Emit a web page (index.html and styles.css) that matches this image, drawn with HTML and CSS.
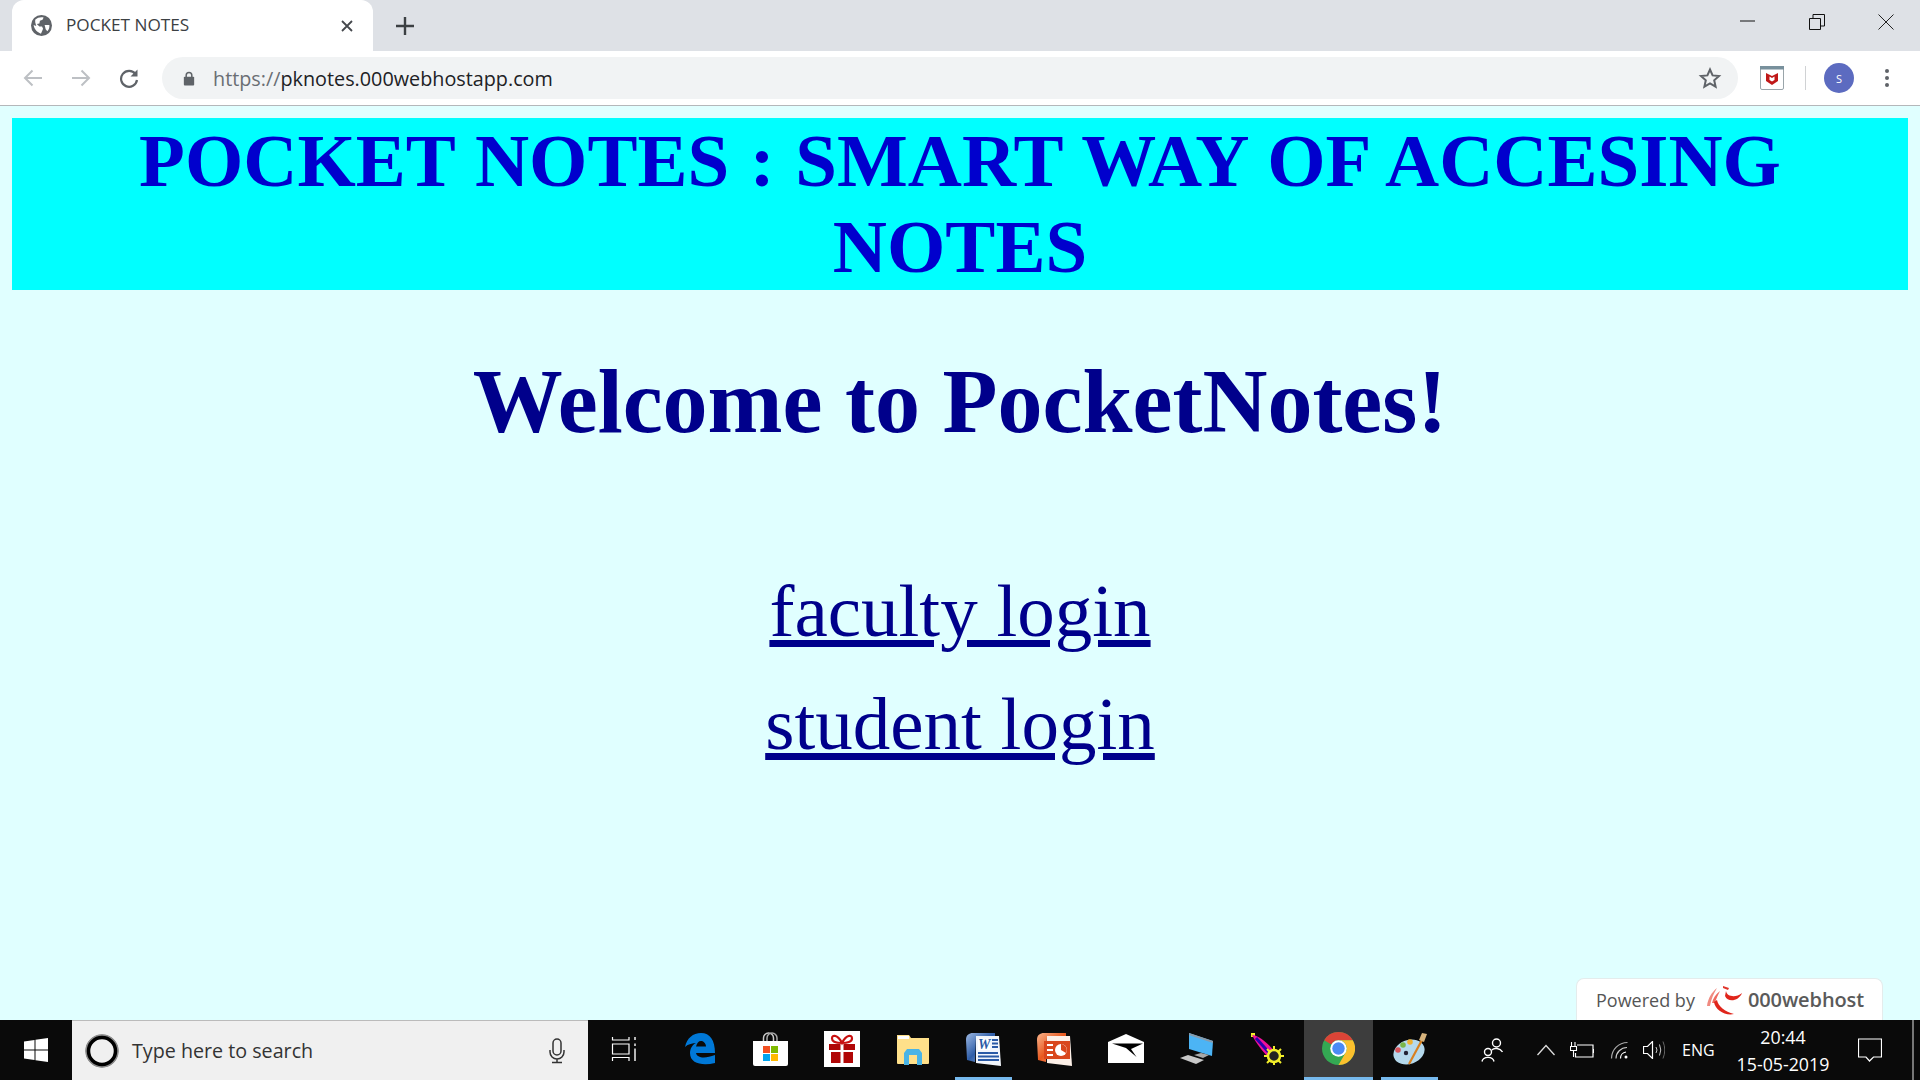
FILE: index.html
```html
<!DOCTYPE html>
<html lang="en">
<head>
    <meta charset="UTF-8">
    <title>POCKET NOTES</title>
    <link rel="stylesheet" href="styles.css">
</head>
<body>
    <div class="tabstrip">
        <div class="tab">
            <svg class="tab-globe" viewBox="0 0 20 20" width="21" height="21"><circle cx="10" cy="10" r="10" fill="#5f6368"/><path d="M4 4.500C6 2.500 9 1.800 12 2.300L11 4.500 8.500 5.500 8 8 5.500 8.500 8 11 10.500 11 11.500 13 9.500 17.800C6 16.500 3 13.500 2.500 9.500L5 10.500 4 7Z" fill="#fff"/><path d="M13 9.500H17.500C17.800 11.800 17 14 15.500 15.500L14 13.500Z" fill="#fff"/></svg>
            <span class="tab-title">POCKET NOTES</span>
            <svg class="tab-close" viewBox="0 0 12 12" width="12" height="12"><path d="M1 1 11 11M11 1 1 11" stroke="#45484d" stroke-width="1.800"/></svg>
        </div>
        <svg class="new-tab" viewBox="0 0 18 18" width="18" height="18"><path d="M9 0V18M0 9H18" stroke="#3c4043" stroke-width="2.400"/></svg>
        <div class="win-controls">
            <svg viewBox="0 0 16 16" width="16" height="16"><path d="M0 7H15" stroke="#111" stroke-width="1"/></svg>
            <svg viewBox="0 0 16 16" width="16" height="16"><path d="M.5 4.500H11.500V15.500H.5ZM4 4.500V.5H15.500V12H11.500" fill="none" stroke="#111" stroke-width="1"/></svg>
            <svg viewBox="0 0 16 16" width="16" height="16"><path d="M.5 .5 15.500 15.500M15.500 .5 .5 15.500" stroke="#222" stroke-width="1"/></svg>
        </div>
    </div>

    <div class="toolbar">
        <svg class="nav-icon" viewBox="0 0 20 20" width="20" height="20"><path d="M19 10H2M9.500 2.500 2 10 9.500 17.500" fill="none" stroke="#bdc0c4" stroke-width="2"/></svg>
        <svg class="nav-icon" viewBox="0 0 20 20" width="20" height="20"><path d="M1 10H18M10.500 2.500 18 10 10.500 17.500" fill="none" stroke="#bdc0c4" stroke-width="2"/></svg>
        <svg class="nav-icon" viewBox="0 0 20 20" width="20" height="20"><path d="M16.500 6A8 8 0 1 0 18 12" fill="none" stroke="#5f6368" stroke-width="2.200"/><path d="M18.500 1.500V8.500H11.500Z" fill="#5f6368"/></svg>
        <div class="omnibox">
            <svg class="lock" viewBox="0 0 12 16" width="12" height="15"><path d="M3 7V4.500A3 3 0 0 1 9 4.500V7" fill="none" stroke="#5f6368" stroke-width="1.600"/><rect x="0.500" y="6" width="11" height="9.500" rx="1" fill="#5f6368"/></svg>
            <span class="url"><span class="url-scheme">https://</span>pknotes.000webhostapp.com</span>
            <svg class="star" viewBox="0 0 24 24" width="24" height="24"><path d="M12 3.500 14.600 9.400 21 10 16.200 14.300 17.600 20.600 12 17.300 6.400 20.600 7.800 14.300 3 10 9.400 9.400Z" fill="none" stroke="#5f6368" stroke-width="2"/></svg>
        </div>
        <svg class="ext-icon" viewBox="0 0 24 24" width="24" height="24"><rect x=".5" y=".5" width="23" height="23" rx="1.500" fill="#fff" stroke="#9aa5aa"/><rect x="0" y="0" width="24" height="3.500" fill="#78909c"/><path d="M6 7 9 8.500 12 10 15 8.500 18 7V15L12 19 6 15Z" fill="#c01818"/><path d="M9.500 10.500 12 12 14.500 10.500V14L12 15.500 9.500 14Z" fill="#fff"/></svg>
        <div class="toolbar-sep"></div>
        <div class="avatar">S</div>
        <svg class="menu-dots" viewBox="0 0 6 20" width="6" height="20"><circle cx="3" cy="3" r="2" fill="#5f6368"/><circle cx="3" cy="10" r="2" fill="#5f6368"/><circle cx="3" cy="17" r="2" fill="#5f6368"/></svg>
    </div>

    <main class="page">
        <h1 class="banner">POCKET NOTES : SMART WAY OF ACCESING NOTES</h1>
        <h2 class="welcome">Welcome to PocketNotes!</h2>
        <div class="login-links">
            <a href="#">faculty login</a>
            <a href="#">student login</a>
        </div>
        <div class="powered">
            <span>Powered by</span>
            <svg class="powered-logo" viewBox="0 0 36 30" width="36" height="30">
                <path d="M1 21C2 13 6 7 11 3 8 8 5 14 4 21Z" fill="#f08a80"/>
                <path d="M6 18C7 13 10 9 14 6 12 10 10 14 9 18Z" fill="#ee6a60"/>
                <path d="M17 1 23 3 22 5 17 3Z" fill="#e0352b"/>
                <path d="M20 6C21 12 30 13 36 8 33 16 22 18 19 11Z" fill="#e0251b"/>
                <path d="M11 15C12 21 19 27 28 29 19 31 9 25 8 17Z" fill="#e0251b"/>
            </svg>
            <span class="powered-name">000webhost</span>
        </div>
    </main>

    <footer class="taskbar">
        <svg class="start-icon" viewBox="0 0 24 24" width="24" height="24"><path d="M0 3.500 10.500 2V11.500H0ZM11.500 1.800 24 0V11.500H11.500ZM0 12.500H10.500V22L0 20.500ZM11.500 12.500H24V24L11.500 22.200Z" fill="#fff"/></svg>
        <div class="search-box">
            <svg class="cortana" viewBox="0 0 34 34" width="34" height="34"><circle cx="17" cy="17" r="14" fill="none" stroke="#000" stroke-width="4.500"/><circle cx="17" cy="17" r="16" fill="none" stroke="#8c8c8c" stroke-width="1.500"/></svg>
            <span class="search-text">Type here to search</span>
            <svg class="mic" viewBox="0 0 18 26" width="18" height="26"><rect x="5" y="1" width="8" height="16" rx="4" fill="none" stroke="#333" stroke-width="1.500"/><path d="M2 12V14A7 7 0 0 0 16 14V12M9 21V24M4 24.500H14" fill="none" stroke="#333" stroke-width="1.500"/></svg>
        </div>
        <div class="task-icons">
            <!-- task view -->
            <div class="task-slot task-view"><svg viewBox="0 0 26 24" width="26" height="24"><path d="M1.500 0V3H18V0M1.500 7H18V17H1.500ZM1.500 24V20.500H18V24" fill="none" stroke="#fff" stroke-width="1.200"/><path d="M24 0V3M24 6.500V9M24 11.500V24" stroke="#fff" stroke-width="1.400"/></svg></div>
            <!-- edge -->
            <div class="task-slot"><svg viewBox="0 0 30 32" width="30" height="32"><path fill-rule="evenodd" d="M0 14C2 5 8 0 16 0 25 0 30 7 30 20H11C12 25 20 26 30 22V30C18 33 5 31 5 20 5 16 7 12 11 10 8 10 3 11 0 14ZM11 13.500H21C21 10 18 8 16 8 13.500 8 12 10 11 13.500Z" fill="#0078d7"/></svg></div>
            <!-- store -->
            <div class="task-slot"><svg viewBox="0 0 35 34" width="35" height="34"><path d="M10.500 10V6A5 5 0 0 1 20.500 6V10" fill="none" stroke="#ccc" stroke-width="1.500"/><path d="M14 10V6A5 5 0 0 1 24 6V10" fill="none" stroke="#aaa" stroke-width="1.500"/><path d="M0 9H35V32Q35 34 33 34H2Q0 34 0 32Z" fill="#fff"/><rect x="10" y="14" width="7" height="7" fill="#f25022"/><rect x="18" y="14" width="7" height="7" fill="#7fba00"/><rect x="10" y="22" width="7" height="7" fill="#00a4ef"/><rect x="18" y="22" width="7" height="7" fill="#ffb900"/></svg></div>
            <!-- gift -->
            <div class="task-slot"><svg viewBox="0 0 36 36" width="36" height="36"><rect width="36" height="36" fill="#fff"/><path d="M5 13H16.500V19H5ZM19.500 13H31V19H19.500ZM7 21H16.500V32H7ZM19.500 21H29V32H19.500Z" fill="#b00606"/><path d="M18 12C14 4 8 3 8 7.500 8 11 13 12 18 12 23 12 28 11 28 7.500 28 3 22 4 18 12Z" fill="none" stroke="#c81010" stroke-width="2.200"/></svg></div>
            <!-- explorer -->
            <div class="task-slot"><svg viewBox="0 0 32 32" width="32" height="32"><path d="M0 2H12L14 5H32V30Q32 31 31 31H1Q0 31 0 30Z" fill="#ffe08a"/><rect x="1" y="3" width="11" height="3" fill="#fff"/><path d="M7 32V20L10 16H22L25 20V32H20V22H12V32Z" fill="#4ab4e6"/></svg></div>
            <!-- word -->
            <div class="task-slot task-open"><svg viewBox="0 0 35 34" width="35" height="34"><defs><linearGradient id="wordBack" x1="0" y1="0" x2="1" y2="1"><stop offset="0" stop-color="#9db8e2"/><stop offset="0.500" stop-color="#2f5ea8"/><stop offset="1" stop-color="#9fb9e0"/></linearGradient></defs><path d="M0 8C0 3 3 1 7 1H29V5H10L9 30 1 28Z" fill="url(#wordBack)"/><path d="M10 4H33L35 34 10 31Z" fill="#f2f6fc"/><path d="M12 6.500H24V18H12Z" fill="#fff"/><text x="12" y="17" class="word-w">W</text><path d="M26 8H32M26 11.500H32M26 15H32M12 21H32M12 24.500H33M12 28H33" stroke="#2a5aa6" stroke-width="2"/></svg></div>
            <!-- powerpoint -->
            <div class="task-slot"><svg viewBox="0 0 35 34" width="35" height="34"><defs><linearGradient id="pptBack" x1="0" y1="0" x2="1" y2="1"><stop offset="0" stop-color="#f9b48c"/><stop offset="0.500" stop-color="#e8591f"/><stop offset="1" stop-color="#f7ab80"/></linearGradient></defs><path d="M0 8C0 3 3 1 7 1H29V5H10L9 30 1 28Z" fill="url(#pptBack)"/><path d="M10 4H33L35 34 10 31Z" fill="#fdf0e8"/><rect x="7" y="9" width="26" height="18" fill="#d9471c"/><path d="M10 13H16M10 18H16M10 23H16" stroke="#fff" stroke-width="2"/><circle cx="24" cy="18" r="6" fill="#fff"/><path d="M24 18V12A6 6 0 0 1 29 21Z" fill="#d9471c"/></svg></div>
            <!-- mail -->
            <div class="task-slot"><svg viewBox="0 0 36 29" width="36" height="29"><path d="M0 8 18 0 36 8V29H0Z" fill="#fff"/><path d="M4 9.500H35L23 15 28.500 23 18 14Z" fill="#000"/></svg></div>
            <!-- this pc -->
            <div class="task-slot"><svg viewBox="0 0 33 31" width="33" height="31"><path d="M9 0 33 8 32 23 9 16Z" fill="#4cb4f5"/><path d="M9 0 33 8V10L9 2Z" fill="#8a9aa8"/><path d="M0 25 8 22 24 27 16 31Z" fill="#c8c8c8"/><path d="M14 22 21 20 29 22 23 25Z" fill="#a8a8a8"/></svg></div>
            <!-- feather -->
            <div class="task-slot"><svg viewBox="0 0 33 32" width="33" height="32"><path d="M0 0H4V4H0Z" fill="#f2ee2a"/><path d="M1 2C7 2 16 9 24 19L18 25C12 19 5 10 1 2Z" fill="#f0109c"/><path d="M5 5 20 22" stroke="#2a00b0" stroke-width="3"/><path d="M23 13V32M13 23H33M16 16 30 30M30 16 16 30" stroke="#f2ee2a" stroke-width="2"/><circle cx="23" cy="23" r="6" fill="#222" stroke="#f2ee2a" stroke-width="2.500"/></svg></div>
            <!-- chrome -->
            <div class="task-slot task-open task-active"><svg viewBox="0 0 33 33" width="33" height="33"><circle cx="16.500" cy="16.500" r="16.500" fill="#34a853"/><path d="M16.500 0A16.500 16.500 0 0 1 30.800 8.250H16.500A8.250 8.250 0 0 0 9.350 12.400L2.200 8.250A16.500 16.500 0 0 1 16.500 0Z" fill="#db4437"/><path d="M30.800 8.250A16.500 16.500 0 0 1 16.500 33L23.650 20.600A8.250 8.250 0 0 0 16.500 8.250Z" fill="#fbc02d"/><circle cx="16.500" cy="16.500" r="8.250" fill="#fff"/><circle cx="16.500" cy="16.500" r="6.200" fill="#4b8bf5"/></svg></div>
            <!-- paint -->
            <div class="task-slot task-open"><svg viewBox="0 0 36 33" width="36" height="33"><ellipse cx="17" cy="20" rx="16" ry="12" transform="rotate(-20 17 20)" fill="#b5d9ec"/><circle cx="6" cy="18" r="2.800" fill="#d8545a"/><circle cx="11" cy="13" r="2.800" fill="#7ab648"/><circle cx="18" cy="10" r="2.800" fill="#f0b030"/><circle cx="14" cy="21" r="2.200" fill="#223"/><path d="M17 32 30 8" stroke="#d9801e" stroke-width="2.200"/><path d="M27 8 30 1 35 2 32 10Z" fill="#d7b37c"/></svg></div>
        </div>
        <div class="tray">
            <svg class="tray-people" viewBox="0 0 22 24" width="22" height="24"><circle cx="15.500" cy="5" r="4" fill="none" stroke="#fff" stroke-width="1.400"/><path d="M11 12C13 9.500 19 10 21.500 14" fill="none" stroke="#fff" stroke-width="1.400"/><circle cx="7" cy="14" r="3.500" fill="none" stroke="#fff" stroke-width="1.400"/><path d="M1 23.500C2 18 12 18 13 23.500" fill="none" stroke="#fff" stroke-width="1.400"/></svg>
            <svg class="tray-chevron" viewBox="0 0 18 12" width="18" height="12"><path d="M.5 11 9 1.500 17.500 11" fill="none" stroke="#ddd" stroke-width="1.300"/></svg>
            <svg class="tray-battery" viewBox="0 0 24 16" width="24" height="16"><path d="M7 3H23V15H5.500V11M23.500 7V11" fill="none" stroke="#fff" stroke-width="1.200"/><path d="M1.500 0V4M5 0V4M.5 4.500H6.500V8.500H.5ZM3.500 8.500V15" fill="none" stroke="#fff" stroke-width="1.100"/></svg>
            <svg class="tray-wifi" viewBox="0 0 18 18" width="18" height="18"><path d="M1.500 17.500A16 16 0 0 1 17.500 1.500" fill="none" stroke="#aaa" stroke-width="1.200"/><path d="M6 17.500A11 11 0 0 1 17 6.500" fill="none" stroke="#ccc" stroke-width="1.200"/><path d="M10.500 17.500A6.500 6.500 0 0 1 16 11" fill="none" stroke="#fff" stroke-width="1.200"/><circle cx="16" cy="16" r="1.500" fill="#fff"/></svg>
            <svg class="tray-sound" viewBox="0 0 22 18" width="22" height="18"><path d="M.5 5.500H4.500L9.500 .5V17.500L4.500 12.500H.5Z" fill="none" stroke="#fff" stroke-width="1.200"/><path d="M13 6Q15 9 13 12M16.500 3.500Q19 9 16.500 14.500" fill="none" stroke="#ccc" stroke-width="1"/><path d="M20 .5Q23.500 9 20 17.500" fill="none" stroke="#666" stroke-width="1"/></svg>
            <span class="tray-lang">ENG</span>
            <div class="clock"><span>20:44</span><span>15-05-2019</span></div>
            <svg class="tray-notif" viewBox="0 0 24 24" width="24" height="24"><path d="M.5 1H23.500V19H15.500L11.500 23 8 19H.5Z" fill="none" stroke="#fff" stroke-width="1.200"/></svg>
            <div class="show-desktop"></div>
        </div>
    </footer>
</body>
</html>
```

FILE: styles.css
```css
* {
    box-sizing: border-box;
}

html, body {
    margin: 0;
    height: 100%;
}

body {
    display: flex;
    flex-direction: column;
    height: 100vh;
    overflow: hidden;
    font-family: "Open Sans", "Noto Sans", sans-serif;
}

/* tab strip */
.tabstrip {
    height: 51px;
    flex: none;
    display: flex;
    align-items: center;
    padding-left: 12px;
    background-color: #dee1e6;
}

.tab {
    width: 361px;
    height: 51px;
    display: flex;
    align-items: center;
    padding: 0 20px 0 19px;
    background-color: #fff;
    border-radius: 12px 12px 0 0;
}

.tab-title {
    margin: -2px 0 0 14px;
    flex: 1;
    font-size: 17.200px;
    color: #3c4043;
}

.new-tab {
    margin-left: 23px;
}

.win-controls {
    margin-left: auto;
    display: flex;
    gap: 53px;
    padding-right: 26px;
    margin-top: -8px;
}

/* toolbar */
.toolbar {
    height: 55px;
    flex: none;
    display: flex;
    align-items: center;
    padding: 0 17px 0 23px;
    background-color: #fff;
    border-bottom: 1px solid #b4b7ba;
}

.nav-icon {
    margin-right: 28px;
}

.omnibox {
    width: 1576px;
    height: 42px;
    margin-left: -5px;
    display: flex;
    align-items: center;
    padding: 0 16px 0 21px;
    background-color: #f1f3f4;
    border-radius: 21px;
}

.url {
    margin-left: 18px;
    flex: 1;
    font-size: 19.800px;
    color: #202124;
}

.url-scheme {
    color: #6a6e73;
}

.ext-icon {
    margin-left: 22px;
}

.toolbar-sep {
    width: 1px;
    height: 24px;
    margin-left: 21px;
    background-color: #d0d2d4;
}

.avatar {
    width: 30px;
    height: 30px;
    margin-left: 18px;
    display: flex;
    align-items: center;
    justify-content: center;
    border-radius: 50%;
    background-color: #5c6bc0;
    color: #fff;
    font-size: 11px;
}

.menu-dots {
    margin-left: 30px;
}

/* page */
.page {
    flex: 1;
    position: relative;
    padding: 12px 12px 0;
    background-color: #e0ffff;
    font-family: "Liberation Serif", "Times New Roman", serif;
    text-align: center;
}

.banner {
    margin: 0;
    background-color: #00ffff;
    color: #0000cd;
    font-size: 75px;
    line-height: 86px;
    word-spacing: 1.800px;
}

.welcome {
    margin: 62px 0 0;
    color: #00008b;
    font-size: 90px;
    line-height: 100px;
}

.login-links {
    margin-top: 114px;
    display: flex;
    flex-direction: column;
    align-items: center;
    gap: 23px;
    font-size: 75px;
    line-height: 90px;
}

.login-links a {
    color: #00008b;
}

.powered {
    position: absolute;
    right: 37px;
    bottom: 0;
    width: 307px;
    height: 42px;
    display: flex;
    align-items: center;
    padding-left: 19px;
    background-color: #fff;
    border: 1px solid #e4ecec;
    border-bottom: 0;
    border-radius: 8px 8px 0 0;
    font-family: "Open Sans", sans-serif;
    font-size: 18px;
    color: #555;
}

.powered-logo {
    margin: 0 6px 0 11px;
}

.powered-name {
    font-weight: 600;
    font-size: 20px;
    letter-spacing: -0.1px;
    color: #5a5a5a;
}

/* windows taskbar */
.taskbar {
    height: 60px;
    flex: none;
    display: flex;
    align-items: center;
    background-color: #0a0a0a;
}

.start-icon {
    margin: 0 24px;
}

.search-box {
    width: 516px;
    height: 60px;
    display: flex;
    align-items: center;
    padding: 0 22px 0 13px;
    background-color: #f0f0f0;
    border-top: 1px solid #bbb;
}

.search-text {
    flex: 1;
    margin-left: 13px;
    font-size: 19.700px;
    color: #333;
}

.task-icons {
    display: flex;
    margin-left: 5px;
}

.task-slot {
    width: 57px;
    height: 60px;
    margin: 0 7px;
    display: flex;
    align-items: center;
    justify-content: center;
    border-bottom: 3px solid transparent;
}

.task-view {
    padding-right: 10px;
}

.task-open {
    border-bottom-color: #76b9ed;
}

.task-active {
    width: 69px;
    margin: 0 1px;
    background-color: #3d3d3d;
}

.word-w {
    font-family: "Liberation Serif", serif;
    font-size: 14px;
    font-weight: bold;
    font-style: italic;
    fill: #2a5aa6;
}

.tray {
    flex: 1;
    display: flex;
    align-items: center;
    color: #fff;
    padding-left: 36px;
}

.tray-chevron {
    margin-left: 34px;
}

.tray-battery {
    margin-left: 15px;
}

.tray-wifi {
    margin-left: 16px;
}

.tray-sound {
    margin-left: 15px;
}

.tray-lang {
    margin-left: 17px;
    font-size: 16px;
}

.clock {
    margin-left: 22px;
    display: flex;
    flex-direction: column;
    align-items: center;
    gap: 5px;
    font-size: 17.800px;
    line-height: 22px;
}

.tray-notif {
    margin-left: 29px;
}

.show-desktop {
    width: 2px;
    height: 60px;
    margin-left: 30px;
    background-color: #777;
}
```
